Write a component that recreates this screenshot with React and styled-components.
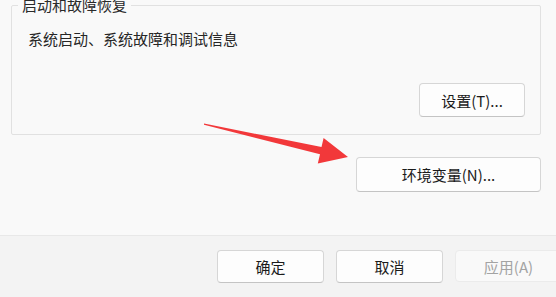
import React from 'react';
import styled, { createGlobalStyle } from 'styled-components';

const GlobalStyle = createGlobalStyle`
  html, body {
    margin: 0;
    padding: 0;
    background: #f9f9f9;
  }
  body {
    width: 556px;
    height: 297px;
    overflow: hidden;
    font-family: "Noto Sans CJK SC", "Noto Sans", "Liberation Sans", sans-serif;
    color: #1b1b1b;
  }
`;

const Window = styled.div`
  position: relative;
  width: 556px;
  height: 297px;
  display: flex;
  flex-direction: column;
  overflow: hidden;
`;

const Body = styled.div`
  height: 236px;
  box-sizing: border-box;
  padding: 0 15px 0 11px;
  background: #f9f9f9;
  border-bottom: 1px solid #e8e8e8;
  display: flex;
  flex-direction: column;
`;

const Group = styled.fieldset`
  margin: -5px 0 0 0;
  padding: 0 15px 17px 6px;
  height: 140px;
  box-sizing: border-box;
  border: 1px solid #e1e1e1;
  border-radius: 2px;
  display: flex;
  flex-direction: column;
  min-inline-size: 0;
`;

const Legend = styled.legend`
  padding: 0 4px;
  font-size: 15px;
  line-height: 20px;
  color: #2a2a2a;
`;

const Description = styled.div`
  margin: 14px 0 0 10px;
  font-size: 15px;
  line-height: 20px;
  color: #262626;
`;

const Row = styled.div`
  display: flex;
  justify-content: flex-end;
  margin-top: ${(p) => p.$top || 0}px;
`;

const Button = styled.button`
  box-sizing: border-box;
  width: ${(p) => p.$width || 107}px;
  height: ${(p) => p.$height || 34}px;
  padding: 0;
  font-family: inherit;
  font-size: 15px;
  color: ${(p) => (p.disabled ? '#a3a3a3' : '#1b1b1b')};
  background: ${(p) => (p.disabled ? '#f9f9f9' : '#fdfdfd')};
  border: 1px solid ${(p) => (p.disabled ? '#ebebeb' : '#d6d6d6')};
  border-bottom-color: ${(p) => (p.disabled ? '#ebebeb' : '#c4c4c4')};
  border-radius: 4px;
  flex-shrink: 0;
`;

const Footer = styled.div`
  flex: 1;
  background: #f3f3f3;
  display: flex;
  align-items: flex-start;
  gap: 12px;
  padding: 14px 0 0 217px;
`;

const Arrow = styled.svg`
  position: absolute;
  left: 0;
  top: 0;
  pointer-events: none;
`;

export default function App() {
  return (
    <Window>
      <GlobalStyle />
      <Body>
        <Group>
          <Legend>启动和故障恢复</Legend>
          <Description>系统启动、系统故障和调试信息</Description>
          <Row $top={34}>
            <Button $width={106}>设置(T)...</Button>
          </Row>
        </Group>
        <Row $top={22}>
          <Button $width={185} $height={35}>环境变量(N)...</Button>
        </Row>
      </Body>
      <Footer>
        <Button $height={33}>确定</Button>
        <Button $height={33}>取消</Button>
        <Button $height={32} disabled>应用(A)</Button>
      </Footer>
      <Arrow width="556" height="297" viewBox="0 0 556 297">
        <polygon
          points="204,123.5 321.5,147 323.6,138 348,157 317.8,163.6 320,154.2 204,124.8"
          fill="#f2383a"
        />
      </Arrow>
    </Window>
  );
}
